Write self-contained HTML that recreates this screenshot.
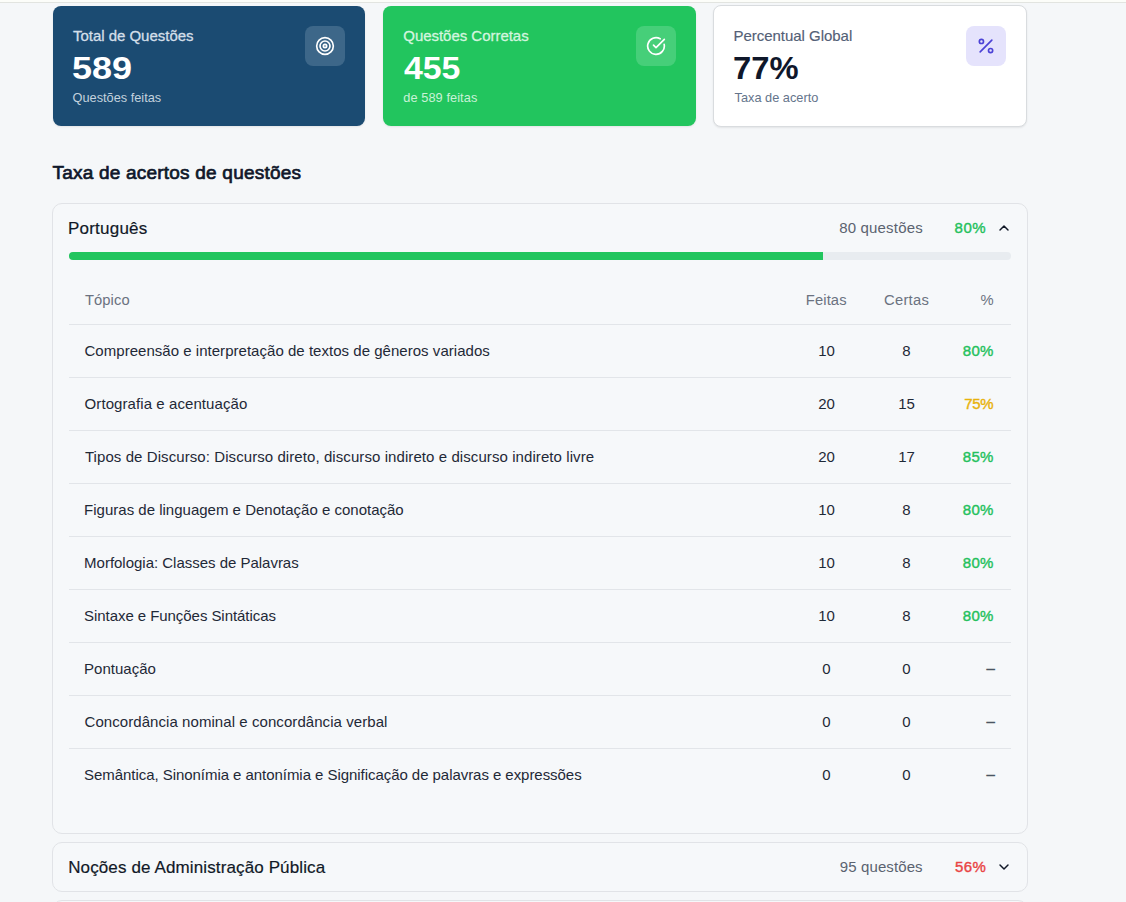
<!DOCTYPE html>
<html lang="pt-BR">
<head>
<meta charset="utf-8">
<title>Taxa de acertos de questões</title>
<style>
*{box-sizing:border-box;margin:0;padding:0}
html,body{width:1126px;height:902px;overflow:hidden}
body{background:#f5f7f9;font-family:"Liberation Sans",sans-serif;color:#111827;position:relative;-webkit-font-smoothing:antialiased}
.topstrip{position:absolute;left:0;top:0;width:1126px;height:3px;background:#fcfdf9;border-bottom:1px solid #e2e4e0}
.wrap{position:absolute;left:52px;top:6px;width:976px}
.stats{display:flex;height:120px;width:976px}
.stat{flex:0 0 auto;border-radius:8px;padding:20px 20px 20px 21px;position:relative;box-shadow:0 1px 2px rgba(0,0,0,.08)}
.stat .lbl{font-size:15px;line-height:20px;font-weight:400;-webkit-text-stroke:0.3px currentColor;white-space:nowrap}
.stat .num{font-size:30.5px;line-height:36px;font-weight:700;margin-top:4px;white-space:nowrap}
.stat .sub{font-size:12.75px;line-height:16px;margin-top:4px;white-space:nowrap}
.stat .ic{position:absolute;right:20.3px;top:20px;width:40px;height:40px;border-radius:8px;display:flex;align-items:center;justify-content:center}
.stat .ic svg{width:20px;height:20px;display:block}
.s1{background:#1b4b72;color:#fff;width:312px;margin-left:1px}
.s1 .lbl{color:#d3dfe9}
.s1 .sub{color:#c3d2de}
.s1 .ic{background:#3d6789}
.s2{background:#22c55e;color:#fff;width:313px;margin-left:18px}
.s2 .lbl{color:#d3f5df}
.s2 .sub{color:#c9f2d7}
.s2 .ic{background:#46cf79}
.s3{background:#fff;border:1px solid #d9dcdf;padding:20px 19px 20px 20px;margin:-1px 0 -1px 17px;width:314px}
.s3 .lbl{color:#536076;-webkit-text-stroke:0.15px currentColor}
.s3 .num{color:#0f172a}
.s3 .sub{color:#64748b}
.s3 .ic{background:#e5e3fc;right:20.3px;top:20px}
h2{font-size:19px;line-height:28px;font-weight:400;-webkit-text-stroke:.7px currentColor;color:#0f172a;margin-top:33px;margin-bottom:-1px;white-space:nowrap}
.acc{border:1px solid #e1e3e7;border-radius:10px;background:#f6f8fa;padding:0 16px}
.acc1{margin-top:17px;height:631px}
.acc2{margin-top:8px;height:50px}
.acc3{margin-top:8px;height:50px}
.hd{display:flex;align-items:center;height:48px;padding-top:0}
.hd .t{position:relative;top:1px;font-size:17px;line-height:24px;font-weight:400;-webkit-text-stroke:0.18px currentColor;color:#111827;flex:1;white-space:nowrap}
.hd .q{font-size:15px;line-height:20px;color:#5b6370;white-space:nowrap}
.hd .p{font-size:15px;line-height:20px;font-weight:400;-webkit-text-stroke:.4px currentColor;margin-left:32px;white-space:nowrap}
.hd svg{width:16px;height:16px;margin-left:8px;margin-right:0;display:block;position:relative;left:.5px}
.g{color:#24c15d}.y{color:#e8b20c}.r{color:#e94444}.d{color:#4b5563}
.bar{height:8px;border-radius:4px;background:#e8ecf0;overflow:hidden}
.bar i{display:block;height:8px;width:80%;background:#22c55e}
table{border-collapse:collapse;width:100%;margin-top:20px;table-layout:fixed}
th{font-size:14.75px;line-height:20px;font-weight:400;color:#6b7280;height:44px;padding:6px 16px 14px;border-bottom:1px solid #e2e5e9;text-align:left;white-space:nowrap;vertical-align:top;padding-top:10px}
td{font-size:15px;line-height:20px;color:#1f2937;padding:16px;border-bottom:1px solid #e2e5e9;white-space:nowrap;height:53px}
tr:last-child td{border-bottom:0}
th.c,td.c{text-align:center;padding-left:0;padding-right:0}
th.e,td.e{text-align:right}
td.e{font-weight:400;-webkit-text-stroke:.4px currentColor}
td.e.d{-webkit-text-stroke:.35px currentColor}
td.e.d span{position:relative;top:-1px;left:-.2px}
/*TUNE-START*/
#l1{letter-spacing:-0.022px;margin-right:0.022px;position:relative;left:-1.04px}
#n1{display:inline-block;transform:scaleX(1.1802);transform-origin:0 50%;position:relative;left:-2.3px}
#u1{letter-spacing:0.007px;margin-right:-0.007px;position:relative;left:-1.48px}
#l2{letter-spacing:-0.030px;margin-right:0.030px;position:relative;left:-0.75px}
#n2{display:inline-block;transform:scaleX(1.1090);transform-origin:0 50%;position:relative;left:0.01px}
#u2{letter-spacing:0.084px;margin-right:-0.084px;position:relative;left:-0.74px}
#l3{letter-spacing:-0.029px;margin-right:0.029px;position:relative;left:-0.54px}
#n3{display:inline-block;transform:scaleX(1.0734);transform-origin:0 50%;position:relative;left:-1.2px}
#u3{letter-spacing:0.019px;margin-right:-0.019px;position:relative;left:0.50px}
#h2{letter-spacing:0.213px;margin-right:-0.213px;position:relative;left:0.50px}
#t1{letter-spacing:0.240px;margin-right:-0.240px;position:relative;left:-1.11px}
#q1{letter-spacing:0.184px;margin-right:-0.184px;position:relative;left:-0.96px}
#p1{letter-spacing:0.640px;margin-right:-0.640px;position:relative;left:-1.27px}
#t2{letter-spacing:0.123px;margin-right:-0.123px;position:relative;left:-0.82px}
#q2{letter-spacing:0.098px;margin-right:-0.098px;position:relative;left:-1.62px}
#p2{letter-spacing:0.391px;margin-right:-0.391px;position:relative;left:-1.28px}
#th1{letter-spacing:0.089px;margin-right:-0.089px;position:relative;left:-0.13px}
#th2{letter-spacing:0.099px;margin-right:-0.099px;position:relative;left:-0.31px}
#th3{letter-spacing:0.253px;margin-right:-0.253px;position:relative;left:-0.06px}
#th4{letter-spacing:0.000px;margin-right:-0.000px;position:relative;left:-1.33px}
#r1{letter-spacing:0.030px;margin-right:-0.030px;position:relative;left:-0.51px}
#r2{letter-spacing:0.078px;margin-right:-0.078px;position:relative;left:-0.40px}
#r3{letter-spacing:0.079px;margin-right:-0.079px;position:relative;left:-0.10px}
#r4{letter-spacing:0.005px;margin-right:-0.005px;position:relative;left:-0.92px}
#r5{letter-spacing:-0.017px;margin-right:0.017px;position:relative;left:-0.92px}
#r6{letter-spacing:-0.058px;margin-right:0.058px;position:relative;left:-0.95px}
#r7{letter-spacing:0.011px;margin-right:-0.011px;position:relative;left:-0.92px}
#r8{letter-spacing:0.067px;margin-right:-0.067px;position:relative;left:-0.51px}
#r9{letter-spacing:-0.050px;margin-right:0.050px;position:relative;left:-0.95px}
#p1r{letter-spacing:0.209px;margin-right:-0.209px;position:relative;left:-1.71px}
#p2r{letter-spacing:-0.382px;margin-right:0.382px;position:relative;left:-1.43px}
#p3r{letter-spacing:0.209px;margin-right:-0.209px;position:relative;left:-1.71px}
#p4r{letter-spacing:0.209px;margin-right:-0.209px;position:relative;left:-1.71px}
#p5r{letter-spacing:0.209px;margin-right:-0.209px;position:relative;left:-1.71px}
#p6r{letter-spacing:0.209px;margin-right:-0.209px;position:relative;left:-1.71px}
/*TUNE-END*/
</style>
</head>
<body>
<div class="topstrip"></div>
<div class="wrap">
  <div class="stats">
    <div class="stat s1">
      <div class="lbl"><span id="l1">Total de Questões</span></div>
      <div class="num"><span id="n1">589</span></div>
      <div class="sub"><span id="u1">Questões feitas</span></div>
      <div class="ic"><svg viewBox="0 0 24 24" fill="none" stroke="#fff" stroke-width="2" stroke-linecap="round" stroke-linejoin="round"><circle cx="12" cy="12" r="10"/><circle cx="12" cy="12" r="6"/><circle cx="12" cy="12" r="2"/></svg></div>
    </div>
    <div class="stat s2">
      <div class="lbl"><span id="l2">Questões Corretas</span></div>
      <div class="num"><span id="n2">455</span></div>
      <div class="sub"><span id="u2">de 589 feitas</span></div>
      <div class="ic"><svg viewBox="0 0 24 24" fill="none" stroke="#fff" stroke-width="2" stroke-linecap="round" stroke-linejoin="round"><path d="M21.801 10A10 10 0 1 1 17 3.335"/><path d="m9 11 3 3L22 4"/></svg></div>
    </div>
    <div class="stat s3">
      <div class="lbl"><span id="l3">Percentual Global</span></div>
      <div class="num"><span id="n3">77%</span></div>
      <div class="sub"><span id="u3">Taxa de acerto</span></div>
      <div class="ic"><svg viewBox="0 0 24 24" fill="none" stroke="#4b42d6" stroke-width="2" stroke-linecap="round" stroke-linejoin="round"><line x1="19" x2="5" y1="5" y2="19"/><circle cx="6.5" cy="6.5" r="2.5"/><circle cx="17.5" cy="17.5" r="2.5"/></svg></div>
    </div>
  </div>

  <h2><span id="h2">Taxa de acertos de questões</span></h2>

  <div class="acc acc1">
    <div class="hd">
      <div class="t"><span id="t1">Português</span></div>
      <div class="q"><span id="q1">80 questões</span></div>
      <div class="p g"><span id="p1">80%</span></div>
      <svg viewBox="0 0 24 24" fill="none" stroke="#111827" stroke-width="2.2" stroke-linecap="round" stroke-linejoin="round"><path d="m18 15-6-6-6 6"/></svg>
    </div>
    <div class="bar"><i></i></div>
    <table>
      <colgroup><col><col style="width:80px"><col style="width:80px"><col style="width:64.5px"></colgroup>
      <thead>
        <tr><th><span id="th1">Tópico</span></th><th class="c"><span id="th2">Feitas</span></th><th class="c"><span id="th3">Certas</span></th><th class="e"><span id="th4">%</span></th></tr>
      </thead>
      <tbody>
        <tr><td><span id="r1">Compreensão e interpretação de textos de gêneros variados</span></td><td class="c"><span id="f1">10</span></td><td class="c"><span id="c1">8</span></td><td class="e g"><span id="p1r">80%</span></td></tr>
        <tr><td><span id="r2">Ortografia e acentuação</span></td><td class="c"><span id="f2">20</span></td><td class="c"><span id="c2">15</span></td><td class="e y"><span id="p2r">75%</span></td></tr>
        <tr><td><span id="r3">Tipos de Discurso: Discurso direto, discurso indireto e discurso indireto livre</span></td><td class="c"><span id="f3">20</span></td><td class="c"><span id="c3">17</span></td><td class="e g"><span id="p3r">85%</span></td></tr>
        <tr><td><span id="r4">Figuras de linguagem e Denotação e conotação</span></td><td class="c"><span id="f4">10</span></td><td class="c"><span id="c4">8</span></td><td class="e g"><span id="p4r">80%</span></td></tr>
        <tr><td><span id="r5">Morfologia: Classes de Palavras</span></td><td class="c"><span id="f5">10</span></td><td class="c"><span id="c5">8</span></td><td class="e g"><span id="p5r">80%</span></td></tr>
        <tr><td><span id="r6">Sintaxe e Funções Sintáticas</span></td><td class="c"><span id="f6">10</span></td><td class="c"><span id="c6">8</span></td><td class="e g"><span id="p6r">80%</span></td></tr>
        <tr><td><span id="r7">Pontuação</span></td><td class="c"><span id="f7">0</span></td><td class="c"><span id="c7">0</span></td><td class="e d"><span id="p7r">–</span></td></tr>
        <tr><td><span id="r8">Concordância nominal e concordância verbal</span></td><td class="c"><span id="f8">0</span></td><td class="c"><span id="c8">0</span></td><td class="e d"><span id="p8r">–</span></td></tr>
        <tr><td><span id="r9">Semântica, Sinonímia e antonímia e Significação de palavras e expressões</span></td><td class="c"><span id="f9">0</span></td><td class="c"><span id="c9">0</span></td><td class="e d"><span id="p9r">–</span></td></tr>
      </tbody>
    </table>
  </div>

  <div class="acc acc2">
    <div class="hd">
      <div class="t"><span id="t2">Noções de Administração Pública</span></div>
      <div class="q"><span id="q2">95 questões</span></div>
      <div class="p r"><span id="p2">56%</span></div>
      <svg viewBox="0 0 24 24" fill="none" stroke="#111827" stroke-width="2.2" stroke-linecap="round" stroke-linejoin="round"><path d="m6 9 6 6 6-6"/></svg>
    </div>
  </div>
  <div class="acc acc3"></div>
</div>
</body>
</html>
